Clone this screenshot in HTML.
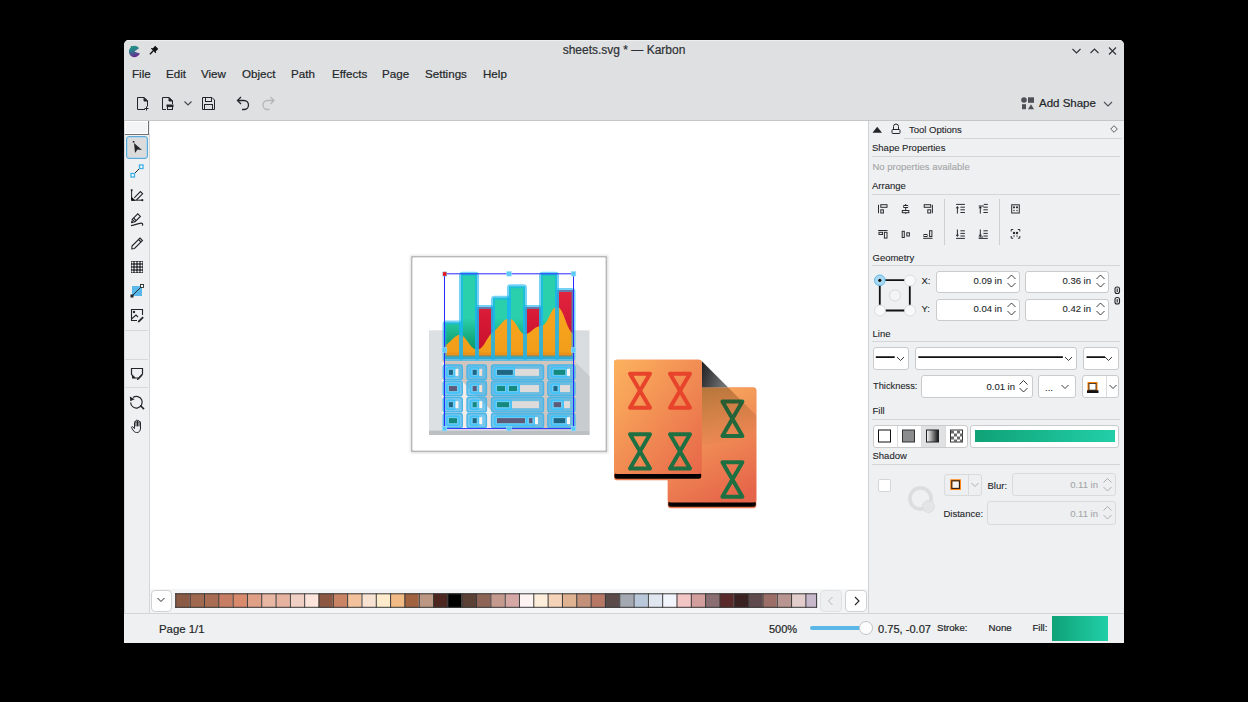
<!DOCTYPE html>
<html><head><meta charset="utf-8">
<style>
*{margin:0;padding:0;box-sizing:border-box}
html,body{width:1248px;height:702px;background:#000;overflow:hidden;font-family:"Liberation Sans",sans-serif;color:#232629}
.a{position:absolute}
.t{position:absolute;white-space:nowrap;line-height:1;-webkit-text-stroke:0.2px currentColor}
.m{font-size:11.6px;top:68.4px}
.d{font-size:9.5px;margin-top:-0.7px;-webkit-text-stroke:0.1px currentColor}
.sec{position:absolute;height:1px;background:#d3d5d7;left:872px;width:248px}
.box{position:absolute;background:#fff;border:1px solid #c9cbcd;border-radius:3px}
.dis{background:#eeeff0;border-color:#d9dadb}
svg{position:absolute;overflow:visible}
</style></head><body>
<!-- window -->
<div class="a" style="left:124px;top:40px;width:1000px;height:603px;background:#eff0f1;border-radius:5px 5px 0 0;overflow:hidden">
  <div class="a" style="left:0;top:0;width:1000px;height:80px;background:#dee0e2"></div>
  <div class="a" style="left:0;top:0;width:1000px;height:1px;background:#eceef0"></div>
</div>
<!-- title -->
<div class="t" style="left:124px;width:1000px;text-align:center;top:44.3px;font-size:12px;color:#2e3134">sheets.svg * — Karbon</div>
<!-- app icon -->
<svg style="left:128px;top:45px" width="14" height="13" viewBox="0 0 14 13">
  <defs><linearGradient id="ai" x1="0" y1="0" x2="0.3" y2="1"><stop offset="0" stop-color="#15a07a"/><stop offset="0.5" stop-color="#2f7a90"/><stop offset="1" stop-color="#6a2a90"/></linearGradient></defs>
  <path d="M6.5 6.5 L11.2 3.2 A5.7 5.7 0 1 0 12 8.2 Z" fill="url(#ai)"/>
  <path d="M6.5 6.5 L11.2 3.2 L9.8 6.2 L12.5 8.8 Z" fill="#d8dadc"/>
  <path d="M2.5 1.5 L4 0.9 L4.2 2.2 Z" fill="#0b5a40"/>
</svg>
<!-- pin -->
<svg style="left:149px;top:45px" width="10" height="10" viewBox="0 0 10 10">
  <path d="M6.2 0.8 L9.3 3.9 L6.8 6.2 L7.2 7.6 L6.6 8.2 L1.9 3.5 L2.5 2.9 L3.9 3.3 Z" fill="#111"/>
  <path d="M4.3 5.8 L0.9 9.2" stroke="#111" stroke-width="1.3"/>
</svg>
<!-- window buttons -->
<svg style="left:1071px;top:45.7px" width="48" height="10" viewBox="0 0 48 10">
  <path d="M1.5 3 L5.5 7 L9.5 3" fill="none" stroke="#2e3134" stroke-width="1.1"/>
  <path d="M19.5 7 L23.5 3 L27.5 7" fill="none" stroke="#2e3134" stroke-width="1.1"/>
  <path d="M38 1.5 L45 8.5 M45 1.5 L38 8.5" fill="none" stroke="#2e3134" stroke-width="1.1"/>
</svg>
<!-- menu -->
<div class="t m" style="left:132px">File</div>
<div class="t m" style="left:166px">Edit</div>
<div class="t m" style="left:201px">View</div>
<div class="t m" style="left:242px">Object</div>
<div class="t m" style="left:291px">Path</div>
<div class="t m" style="left:332px">Effects</div>
<div class="t m" style="left:382px">Page</div>
<div class="t m" style="left:425px">Settings</div>
<div class="t m" style="left:483px">Help</div>
<!-- toolbar icons -->
<svg style="left:134px;top:95px" width="150" height="16" viewBox="0 0 150 16">
  <g fill="none" stroke="#232629" stroke-width="1">
    <path d="M3.5 2.5 H10 L13.5 6 V11.5 M11 14.5 H3.5 V2.5"/>
    <path d="M10 2.5 L13.5 6 H10 Z" fill="#232629"/>
    <path d="M12.5 11.5 V15.5 M10.5 13.5 H14.5"/>
    <path d="M28.5 2.5 H35 L38.5 6 V9 M32 14.5 H28.5 V2.5"/>
    <path d="M35 2.5 L38.5 6 H35 Z" fill="#232629"/>
    <rect x="33.5" y="10.5" width="5" height="4" fill="#dee0e2"/><rect x="33" y="10" width="6" height="1.6" fill="#232629"/>
    <path d="M50.5 6.5 L54 10 L57.5 6.5" stroke="#4a4d50" stroke-width="1.2"/>
    <path d="M68.5 2.5 H78 L80.5 5 V14.5 H68.5 Z"/>
    <rect x="71.5" y="2.5" width="6" height="4"/>
    <rect x="70.5" y="9.5" width="8" height="5"/>
    <path d="M104 5.5 H110 A4.5 4.5 0 0 1 110 14.5 H108" stroke-width="1.3"/>
    <path d="M107 2 L103.5 5.5 L107 9" stroke-width="1.3"/>
    <path d="M139.5 5.5 H133.5 A4.5 4.5 0 0 0 133.5 14.5 H135.5" stroke="#b4b6b8" stroke-width="1.3"/>
    <path d="M136.5 2 L140 5.5 L136.5 9" stroke="#b4b6b8" stroke-width="1.3"/>
  </g>
</svg>
<!-- add shape -->
<svg style="left:1021px;top:97px" width="14" height="13" viewBox="0 0 14 13">
  <circle cx="3" cy="3" r="2.8" fill="#4d5054"/>
  <rect x="7" y="0.3" width="6" height="5.5" fill="#4d5054"/>
  <rect x="1" y="7.2" width="4" height="5" fill="#4d5054"/>
  <path d="M7 12.2 L10 7.2 L13 12.2 Z" fill="#4d5054"/>
</svg>
<div class="t" style="left:1039px;top:98.3px;font-size:11.5px">Add Shape</div>
<svg style="left:1103px;top:101px" width="10" height="6" viewBox="0 0 10 6"><path d="M1 1 L5 5 L9 1" fill="none" stroke="#4d5054" stroke-width="1.1"/></svg>

<!-- header separator -->
<div class="a" style="left:124px;top:120px;width:1000px;height:1px;background:#c4c6c8"></div>

<!-- toolbox -->
<div class="a" style="left:124px;top:121px;width:1px;height:492px;background:#d6d8da"></div>
<div class="a" style="left:125px;top:121px;width:23px;height:13px;background:#f3f4f5;border:1px solid #fff"></div>
<div class="a" style="left:148px;top:121px;width:1px;height:14px;background:#6e7275"></div>
<div class="a" style="left:125px;top:134px;width:24px;height:1px;background:#6e7275"></div>
<div class="a" style="left:149px;top:134px;width:1px;height:479px;background:#d4d6d8"></div>


<!-- toolbox buttons -->
<div class="a" style="left:125.5px;top:136px;width:22.5px;height:22.5px;border:1px solid #5eaad6;border-radius:3px;background:#dcdbdb;box-shadow:inset 0 0 0 1px #b4d6ea"></div>
<svg style="left:129px;top:139px" width="16" height="16" viewBox="0 0 16 16">
  <path d="M5 4 L13 11 L8.5 10.5 L6 14 Z" fill="#232629"/>
  <rect x="3.8" y="2" width="1.6" height="1.6" fill="#232629"/>
</svg>
<svg style="left:129px;top:163px" width="16" height="16" viewBox="0 0 16 16">
  <path d="M4 12 L12 4" stroke="#232629" stroke-width="1"/>
  <rect x="2" y="10.5" width="3.5" height="3.5" fill="#fff" stroke="#3daee9" stroke-width="1.3"/>
  <rect x="10.5" y="2" width="3.5" height="3.5" fill="#fff" stroke="#3daee9" stroke-width="1.3"/>
</svg>
<svg style="left:129px;top:187px" width="16" height="16" viewBox="0 0 16 16">
  <g fill="none" stroke="#232629">
  <path d="M2.6 3 V13.2 H13" stroke-width="1"/>
  <path d="M5.2 10.8 L11.4 4.6 L13.6 6.8 L7.4 13" stroke-width="1.1"/>
  </g>
  <rect x="1.8" y="2.2" width="1.7" height="2" fill="#232629"/>
  <circle cx="13.3" cy="13.2" r="1.1" fill="#232629"/>
  <path d="M2.2 9.6 L6.6 13.8 L2.2 13.8 Z" fill="#111"/>
</svg>
<svg style="left:129px;top:211px" width="16" height="16" viewBox="0 0 16 16">
  <g fill="none" stroke="#232629" stroke-width="1.1">
  <path d="M3.2 8.4 L8.8 2.8 L11.4 5.4 L5.8 11 Z"/>
  <path d="M4.6 7 L7.2 9.6"/>
  <path d="M2 14.6 C5.5 14.2 8.5 12.8 11 12.3 C13.5 11.8 14.4 12.8 13.2 14.6" stroke-width="1.2"/>
  </g>
  <path d="M2.5 9.2 L5 11.7 L2.1 12.2 Z" fill="#111"/>
</svg>
<svg style="left:129px;top:235px" width="16" height="16" viewBox="0 0 16 16">
  <g fill="none" stroke="#232629" stroke-width="1.1">
  <path d="M3 11 L11 3 L13.5 5.5 L5.5 13.5 L2.8 13.8 Z"/>
  <path d="M9.5 4.5 L12 7"/>
  </g>
</svg>
<svg style="left:129px;top:259px" width="16" height="16" viewBox="0 0 16 16">
  <rect x="2" y="2" width="12" height="12" fill="#232629"/>
  <g fill="#eff0f1"><circle cx="3.5" cy="3.5" r="1.05"/><circle cx="3.5" cy="6.5" r="1.05"/><circle cx="3.5" cy="9.5" r="1.05"/><circle cx="3.5" cy="12.5" r="1.05"/><circle cx="6.5" cy="3.5" r="1.05"/><circle cx="6.5" cy="6.5" r="1.05"/><circle cx="6.5" cy="9.5" r="1.05"/><circle cx="6.5" cy="12.5" r="1.05"/><circle cx="9.5" cy="3.5" r="1.05"/><circle cx="9.5" cy="6.5" r="1.05"/><circle cx="9.5" cy="9.5" r="1.05"/><circle cx="9.5" cy="12.5" r="1.05"/><circle cx="12.5" cy="3.5" r="1.05"/><circle cx="12.5" cy="6.5" r="1.05"/><circle cx="12.5" cy="9.5" r="1.05"/><circle cx="12.5" cy="12.5" r="1.05"/></g>
</svg>
<svg style="left:129px;top:283px" width="16" height="16" viewBox="0 0 16 16">
  <rect x="3" y="3" width="10" height="10" fill="#3daee9" opacity="0.85"/>
  <path d="M3 13 L13 3" stroke="#232629" stroke-width="1"/>
  <rect x="1.5" y="11.5" width="3" height="3" fill="#232629"/>
  <rect x="11.5" y="1.5" width="3" height="3" fill="#fff" stroke="#232629" stroke-width="0.9"/>
</svg>
<svg style="left:129px;top:307px" width="16" height="16" viewBox="0 0 16 16">
  <g fill="none" stroke="#232629" stroke-width="1.1">
  <path d="M8 13.5 H2.5 V2.5 H13.5 V8"/>
  <path d="M2.5 12 L7 8 L9 10"/>
  </g>
  <circle cx="5" cy="5" r="1.2" fill="#232629"/>
  <path d="M9 14 L13.5 9.5 L14.8 10.8 L10.3 15.3 L8.8 15.3 Z" fill="#232629"/>
</svg>
<div class="a" style="left:125px;top:330px;width:23px;height:1px;background:#d6d8da"></div>
<div class="a" style="left:125px;top:359px;width:23px;height:1px;background:#d6d8da"></div>
<svg style="left:129px;top:365px" width="16" height="16" viewBox="0 0 16 16">
  <g fill="none" stroke="#232629" stroke-width="1.2">
  <path d="M2.5 3.5 H13.5 V9 L10 13 H6 L2.5 9.5 Z"/>
  </g>
  <path d="M3 10 L6.5 13.5 L3 13.5 Z" fill="#232629"/>
  <path d="M8 14 L12.5 9.5 L13.5 10.5 L9 15 L8 15 Z" fill="#232629"/>
</svg>
<div class="a" style="left:125px;top:387px;width:23px;height:1px;background:#d6d8da"></div>
<svg style="left:129px;top:394px" width="16" height="16" viewBox="0 0 16 16">
  <g fill="none" stroke="#232629" stroke-width="1.2">
  <path d="M4 3.5 A5.8 5.8 0 1 1 1.6 8.5"/>
  <path d="M11.3 11.5 L15 15.2" stroke-width="1.7"/>
  </g>
  <path d="M0.8 2.5 L1.3 7.3 L5.6 5.2 Z" fill="#232629"/>
</svg>
<svg style="left:129px;top:418px" width="16" height="16" viewBox="0 0 16 16">
  <path d="M5.5 9.5 V4.2 C5.5 3.2 7 3.2 7 4.2 V8 M7 4.2 V2.8 C7 1.8 8.5 1.8 8.5 2.8 V8 M8.5 3.2 C8.5 2.2 10 2.2 10 3.2 V8 M10 4.2 C10 3.2 11.5 3.2 11.5 4.2 V10 C11.5 13 10 14.5 8 14.5 H7.5 C5.8 14.5 5 13.5 4 12 L2.6 9.8 C2.2 9 3 8.3 3.8 8.9 L5.5 10.5" fill="none" stroke="#232629" stroke-width="1" stroke-linejoin="round" stroke-linecap="round"/>
</svg>

<!-- canvas -->
<div class="a" style="left:150px;top:121px;width:718px;height:468px;background:#fff"></div>
<!-- DRAW -->
<svg style="left:0;top:0" width="1248" height="702" viewBox="0 0 1248 702">
<defs>
<linearGradient id="gb" gradientUnits="userSpaceOnUse" x1="0" y1="318" x2="0" y2="348"><stop offset="0" stop-color="#2ad0ac"/><stop offset="1" stop-color="#0d9a68"/></linearGradient>
<linearGradient id="rb" gradientUnits="userSpaceOnUse" x1="0" y1="290" x2="0" y2="350"><stop offset="0" stop-color="#e3243f"/><stop offset="1" stop-color="#c80f2c"/></linearGradient>
<linearGradient id="og" gradientUnits="userSpaceOnUse" x1="0" y1="310" x2="0" y2="356"><stop offset="0" stop-color="#f7a51e"/><stop offset="1" stop-color="#f29d1a"/></linearGradient>
<linearGradient id="pn" x1="0" y1="0" x2="1" y2="0"><stop offset="0" stop-color="#dde0e3"/><stop offset="1" stop-color="#d9dcdf"/></linearGradient>
<linearGradient id="doc" x1="0" y1="0" x2="1" y2="1"><stop offset="0" stop-color="#fcb35e"/><stop offset="1" stop-color="#e76749"/></linearGradient>
<linearGradient id="doc2" x1="0.3" y1="0" x2="0.7" y2="1"><stop offset="0" stop-color="#f9ad5e"/><stop offset="1" stop-color="#e6654a"/></linearGradient>
<linearGradient id="fold" x1="0" y1="0" x2="1" y2="1"><stop offset="0" stop-color="#222" stop-opacity="0.95"/><stop offset="0.6" stop-color="#333" stop-opacity="0.6"/><stop offset="1" stop-color="#555" stop-opacity="0"/></linearGradient>
<filter id="ps" x="-5%" y="-5%" width="110%" height="110%"><feGaussianBlur stdDeviation="1"/></filter>
</defs>
<rect x="411.5" y="256.5" width="195.5" height="195.5" fill="none" stroke="#bbb" stroke-width="2" opacity="0.6" filter="url(#ps)"/>
<rect x="412" y="257" width="194" height="194" fill="#fff" stroke="#949494" stroke-width="1.1"/>
<rect x="412.5" y="257.5" width="193" height="193" fill="#fff"/>
<rect x="429" y="330.3" width="160.5" height="104.7" fill="url(#pn)"/>
<rect x="429" y="430.6" width="160.5" height="4.4" fill="#bcc0c3"/>
<path d="M575 362 L589.5 376 V430.6 H575 Z" fill="#c9cccf"/>
<rect x="442" y="359.5" width="133.5" height="70" fill="#d0c5bf"/>
<path d="M442 361 L511 430 H442 Z" fill="#f3ece8"/>
<rect x="444.5" y="322.5" width="16.5" height="33.5" fill="url(#gb)"/>
<rect x="461" y="273.8" width="16" height="82.19999999999999" fill="url(#gb)"/>
<rect x="477" y="307" width="16" height="49" fill="url(#rb)"/>
<rect x="493" y="297.7" width="16" height="58.30000000000001" fill="url(#gb)"/>
<rect x="509" y="286.3" width="16" height="69.69999999999999" fill="url(#gb)"/>
<rect x="525" y="307" width="16" height="49" fill="url(#rb)"/>
<rect x="541" y="273.8" width="16" height="82.19999999999999" fill="url(#gb)"/>
<rect x="557" y="290" width="16.5" height="66" fill="url(#rb)"/>
<path d="M444.5 346 C451 342 455 334.8 460 334.8 C466 334.8 470 349.7 477 349.7 C484 349.7 487 336 493 332 C500 327 503 318.4 509 318.4 C516 318.4 519 334 525 334 C531 334 534 326.2 541 326 C549 325 550 307 557 307 C564 307 566 330 573.5 334 V355.6 H444.5 Z" fill="url(#og)"/>
<rect x="444.5" y="352.5" width="129" height="3.1" fill="#ea921a"/>
<rect x="444.5" y="355.6" width="129" height="3.4" fill="#5a9a9c"/>
<rect x="444.5" y="322.5" width="16.5" height="36.5" rx="1.5" fill="none" stroke="#18b4f2" stroke-opacity="0.6" stroke-width="4"/>
<rect x="461" y="273.8" width="16" height="85.19999999999999" rx="1.5" fill="none" stroke="#18b4f2" stroke-opacity="0.6" stroke-width="4"/>
<rect x="477" y="307" width="16" height="52" rx="1.5" fill="none" stroke="#18b4f2" stroke-opacity="0.6" stroke-width="4"/>
<rect x="493" y="297.7" width="16" height="61.30000000000001" rx="1.5" fill="none" stroke="#18b4f2" stroke-opacity="0.6" stroke-width="4"/>
<rect x="509" y="286.3" width="16" height="72.69999999999999" rx="1.5" fill="none" stroke="#18b4f2" stroke-opacity="0.6" stroke-width="4"/>
<rect x="525" y="307" width="16" height="52" rx="1.5" fill="none" stroke="#18b4f2" stroke-opacity="0.6" stroke-width="4"/>
<rect x="541" y="273.8" width="16" height="85.19999999999999" rx="1.5" fill="none" stroke="#18b4f2" stroke-opacity="0.6" stroke-width="4"/>
<rect x="557" y="290" width="16.5" height="69" rx="1.5" fill="none" stroke="#18b4f2" stroke-opacity="0.6" stroke-width="4"/>
<rect x="443.2" y="365.0" width="19.100000000000044" height="14.700000000000012" rx="2.2" fill="#42b8f0" fill-opacity="0.7" stroke="#4ab6e8" stroke-width="1.4"/>
<rect x="467.0" y="365.0" width="19.4" height="14.700000000000012" rx="2.2" fill="#42b8f0" fill-opacity="0.7" stroke="#4ab6e8" stroke-width="1.4"/>
<rect x="491.5" y="365.0" width="51.999999999999964" height="14.700000000000012" rx="2.2" fill="#42b8f0" fill-opacity="0.7" stroke="#4ab6e8" stroke-width="1.4"/>
<rect x="547.8" y="365.0" width="27.100000000000044" height="14.700000000000012" rx="2.2" fill="#42b8f0" fill-opacity="0.7" stroke="#4ab6e8" stroke-width="1.4"/>
<rect x="443.2" y="381.3" width="19.100000000000044" height="14.500000000000023" rx="2.2" fill="#42b8f0" fill-opacity="0.7" stroke="#4ab6e8" stroke-width="1.4"/>
<rect x="467.0" y="381.3" width="19.4" height="14.500000000000023" rx="2.2" fill="#42b8f0" fill-opacity="0.7" stroke="#4ab6e8" stroke-width="1.4"/>
<rect x="491.5" y="381.3" width="51.999999999999964" height="14.500000000000023" rx="2.2" fill="#42b8f0" fill-opacity="0.7" stroke="#4ab6e8" stroke-width="1.4"/>
<rect x="547.8" y="381.3" width="27.100000000000044" height="14.500000000000023" rx="2.2" fill="#42b8f0" fill-opacity="0.7" stroke="#4ab6e8" stroke-width="1.4"/>
<rect x="443.2" y="397.40000000000003" width="19.100000000000044" height="14.499999999999966" rx="2.2" fill="#42b8f0" fill-opacity="0.7" stroke="#4ab6e8" stroke-width="1.4"/>
<rect x="467.0" y="397.40000000000003" width="19.4" height="14.499999999999966" rx="2.2" fill="#42b8f0" fill-opacity="0.7" stroke="#4ab6e8" stroke-width="1.4"/>
<rect x="491.5" y="397.40000000000003" width="51.999999999999964" height="14.499999999999966" rx="2.2" fill="#42b8f0" fill-opacity="0.7" stroke="#4ab6e8" stroke-width="1.4"/>
<rect x="547.8" y="397.40000000000003" width="27.100000000000044" height="14.499999999999966" rx="2.2" fill="#42b8f0" fill-opacity="0.7" stroke="#4ab6e8" stroke-width="1.4"/>
<rect x="443.2" y="413.5" width="19.100000000000044" height="14.300000000000034" rx="2.2" fill="#42b8f0" fill-opacity="0.7" stroke="#4ab6e8" stroke-width="1.4"/>
<rect x="467.0" y="413.5" width="19.4" height="14.300000000000034" rx="2.2" fill="#42b8f0" fill-opacity="0.7" stroke="#4ab6e8" stroke-width="1.4"/>
<rect x="491.5" y="413.5" width="51.999999999999964" height="14.300000000000034" rx="2.2" fill="#42b8f0" fill-opacity="0.7" stroke="#4ab6e8" stroke-width="1.4"/>
<rect x="547.8" y="413.5" width="27.100000000000044" height="14.300000000000034" rx="2.2" fill="#42b8f0" fill-opacity="0.7" stroke="#4ab6e8" stroke-width="1.4"/>
<rect x="446.59999999999997" y="367.85" width="8.6" height="9" rx="2" fill="#6fcaf0" stroke="#3ec2fb" stroke-width="1.5"/>
<rect x="448.9" y="369.85" width="4" height="5" fill="#1f6584"/>
<rect x="455.4" y="368.85" width="3" height="7" fill="#fbf6f2"/>
<rect x="470.4" y="367.85" width="8.6" height="9" rx="2" fill="#6fcaf0" stroke="#3ec2fb" stroke-width="1.5"/>
<rect x="472.7" y="369.85" width="4" height="5" fill="#1f6584"/>
<rect x="479.2" y="368.85" width="3" height="7" fill="#f2e0d8"/>
<rect x="494.7" y="367.85" width="20.399999999999956" height="9" rx="2" fill="#6fcaf0" stroke="#3ec2fb" stroke-width="1.5"/>
<rect x="497" y="369.85" width="15.799999999999955" height="5" fill="#1f6584"/>
<rect x="515" y="368.85" width="24" height="7" fill="#dedcdb"/>
<rect x="551.4000000000001" y="367.85" width="16.1" height="9" rx="2" fill="#6fcaf0" stroke="#3ec2fb" stroke-width="1.5"/>
<rect x="553.7" y="369.85" width="11.5" height="5" fill="#14897e"/>
<rect x="567" y="368.85" width="3" height="7" fill="#fbf6f2"/>
<rect x="446.7" y="384.05" width="12.6" height="9" rx="2" fill="#6fcaf0" stroke="#3ec2fb" stroke-width="1.5"/>
<rect x="449" y="386.05" width="8" height="5" fill="#5e5a7a"/>
<rect x="470.4" y="384.05" width="8.6" height="9" rx="2" fill="#6fcaf0" stroke="#3ec2fb" stroke-width="1.5"/>
<rect x="472.7" y="386.05" width="4" height="5" fill="#5e5a7a"/>
<rect x="479.2" y="385.05" width="3" height="7" fill="#f2e0d8"/>
<rect x="494.7" y="384.05" width="12.6" height="9" rx="2" fill="#6fcaf0" stroke="#3ec2fb" stroke-width="1.5"/>
<rect x="506.7" y="384.05" width="12.6" height="9" rx="2" fill="#6fcaf0" stroke="#3ec2fb" stroke-width="1.5"/>
<rect x="497" y="386.05" width="8" height="5" fill="#14897e"/>
<rect x="509" y="386.05" width="8" height="5" fill="#14897e"/>
<rect x="520" y="385.05" width="19" height="7" fill="#dedcdb"/>
<rect x="551.2" y="384.05" width="8.6" height="9" rx="2" fill="#6fcaf0" stroke="#3ec2fb" stroke-width="1.5"/>
<rect x="553.5" y="386.05" width="4" height="5" fill="#1f6584"/>
<rect x="560" y="385.05" width="10" height="7" fill="#dedcdb"/>
<rect x="446.59999999999997" y="400.15" width="8.6" height="9" rx="2" fill="#6fcaf0" stroke="#3ec2fb" stroke-width="1.5"/>
<rect x="448.9" y="402.15" width="4" height="5" fill="#1f6584"/>
<rect x="455.4" y="401.15" width="3" height="7" fill="#fbf6f2"/>
<rect x="470.4" y="400.15" width="8.6" height="9" rx="2" fill="#6fcaf0" stroke="#3ec2fb" stroke-width="1.5"/>
<rect x="472.7" y="402.15" width="4" height="5" fill="#14897e"/>
<rect x="479.2" y="401.15" width="3" height="7" fill="#fbf6f2"/>
<rect x="494.7" y="400.15" width="16.6" height="9" rx="2" fill="#6fcaf0" stroke="#3ec2fb" stroke-width="1.5"/>
<rect x="497" y="402.15" width="12" height="5" fill="#14897e"/>
<rect x="512" y="401.15" width="27" height="7" fill="#dedcdb"/>
<rect x="551.4000000000001" y="400.15" width="11.899999999999954" height="9" rx="2" fill="#6fcaf0" stroke="#3ec2fb" stroke-width="1.5"/>
<rect x="553.7" y="402.15" width="7.2999999999999545" height="5" fill="#5e5a7a"/>
<rect x="564" y="401.15" width="6" height="7" fill="#dedcdb"/>
<rect x="446.7" y="416.15" width="12.6" height="9" rx="2" fill="#6fcaf0" stroke="#3ec2fb" stroke-width="1.5"/>
<rect x="449" y="418.15" width="8" height="5" fill="#14897e"/>
<rect x="470.4" y="416.15" width="8.6" height="9" rx="2" fill="#6fcaf0" stroke="#3ec2fb" stroke-width="1.5"/>
<rect x="472.7" y="418.15" width="4" height="5" fill="#1f6584"/>
<rect x="479.2" y="417.15" width="3" height="7" fill="#fbf6f2"/>
<rect x="494.7" y="416.15" width="32.6" height="9" rx="2" fill="#6fcaf0" stroke="#3ec2fb" stroke-width="1.5"/>
<rect x="526.7" y="416.15" width="8.1" height="9" rx="2" fill="#6fcaf0" stroke="#3ec2fb" stroke-width="1.5"/>
<rect x="497" y="418.15" width="28" height="5" fill="#5e5a7a"/>
<rect x="529" y="418.15" width="3.5" height="5" fill="#5e5a7a"/>
<rect x="535" y="417.15" width="3" height="7" fill="#fbf6f2"/>
<rect x="551.4000000000001" y="416.15" width="16.1" height="9" rx="2" fill="#6fcaf0" stroke="#3ec2fb" stroke-width="1.5"/>
<rect x="553.7" y="418.15" width="11.5" height="5" fill="#1f6584"/>
<rect x="567" y="417.15" width="3" height="7" fill="#fbf6f2"/>
<rect x="444.5" y="273.8" width="129" height="154.8" fill="none" stroke="#2a2aff" stroke-width="1"/>
<rect x="506.7" y="271.5" width="4.6" height="4.6" fill="#5cc8f8" stroke="#9de0ff" stroke-width="0.6"/>
<rect x="571.2" y="271.5" width="4.6" height="4.6" fill="#5cc8f8" stroke="#9de0ff" stroke-width="0.6"/>
<rect x="442.2" y="347.7" width="4.6" height="4.6" fill="#5cc8f8" stroke="#9de0ff" stroke-width="0.6"/>
<rect x="571.2" y="347.7" width="4.6" height="4.6" fill="#5cc8f8" stroke="#9de0ff" stroke-width="0.6"/>
<rect x="442.2" y="426.3" width="4.6" height="4.6" fill="#5cc8f8" stroke="#9de0ff" stroke-width="0.6"/>
<rect x="506.7" y="426.3" width="4.6" height="4.6" fill="#5cc8f8" stroke="#9de0ff" stroke-width="0.6"/>
<rect x="571.2" y="426.3" width="4.6" height="4.6" fill="#5cc8f8" stroke="#9de0ff" stroke-width="0.6"/>
<rect x="442.8" y="271.9" width="4" height="4.2" fill="#e8141a" stroke="#7fd0f0" stroke-width="0.5"/>
<rect x="667.8" y="387.5" width="88.5" height="120.8" rx="3" fill="#ec7a50"/>
<rect x="668.3" y="501" width="87.5" height="5.8" rx="2.5" fill="#050100"/>
<rect x="667.8" y="387.5" width="88.5" height="115" rx="3" fill="url(#doc2)"/>
<path d="M722.4 401.6 H742.4 L722.4 436.1 H742.4 Z" fill="none" stroke="#1e7042" stroke-width="4" stroke-linejoin="round"/>
<path d="M722.4 462.2 H742.4 L722.4 496.7 H742.4 Z" fill="none" stroke="#1e7042" stroke-width="4" stroke-linejoin="round"/>
<defs><clipPath id="bdc"><rect x="667.8" y="387.5" width="88.5" height="115" rx="3"/></clipPath><linearGradient id="fd" x1="0" y1="0" x2="1" y2="0.3"><stop offset="0" stop-color="#1e1e20"/><stop offset="1" stop-color="#707274"/></linearGradient><linearGradient id="fs2" gradientUnits="userSpaceOnUse" x1="702" y1="388" x2="720" y2="445"><stop offset="0" stop-color="#4a2000" stop-opacity="0.38"/><stop offset="1" stop-color="#4a2000" stop-opacity="0"/></linearGradient></defs>
<path d="M701.7 361 L728.2 387.5 L701.7 387.5 Z" fill="url(#fd)"/>
<g clip-path="url(#bdc)"><path d="M701.7 387.5 L728.2 387.5 L785 444.3 L701.7 444.3 Z" fill="url(#fs2)"/></g>
<rect x="614" y="359.7" width="87.7" height="120.5" rx="3" fill="#ee7c50"/>
<rect x="614.5" y="472.8" width="86.7" height="5.9" rx="2.5" fill="#050100"/>
<rect x="614" y="359.7" width="87.7" height="114.3" rx="3" fill="url(#doc)"/>
<path d="M630.0 373.8 H650.0 L630.0 407.8 H650.0 Z" fill="none" stroke="#e8432b" stroke-width="4" stroke-linejoin="round"/>
<path d="M670.0 373.8 H690.0 L670.0 407.8 H690.0 Z" fill="none" stroke="#e8432b" stroke-width="4" stroke-linejoin="round"/>
<path d="M630.0 434.3 H650.0 L630.0 468.4 H650.0 Z" fill="none" stroke="#1e7042" stroke-width="4" stroke-linejoin="round"/>
<path d="M670.0 434.3 H690.0 L670.0 468.4 H690.0 Z" fill="none" stroke="#1e7042" stroke-width="4" stroke-linejoin="round"/>
</svg>
<!-- /DRAW -->
<!-- docker border -->
<div class="a" style="left:868px;top:121px;width:1px;height:492px;background:#cfd1d3"></div>


<!-- docker content -->
<svg style="left:872px;top:126px" width="11" height="7" viewBox="0 0 11 7"><path d="M0.5 6.8 L5.2 0.8 L10 6.8 Z" fill="#232629"/></svg>
<svg style="left:891px;top:123px" width="10" height="11" viewBox="0 0 10 11"><g fill="none" stroke="#232629" stroke-width="1"><path d="M2.5 6.5 V3.5 A2.5 2.5 0 0 1 7.5 3.5 V6.5"/><rect x="1" y="6.5" width="8" height="4" rx="0.8"/></g></svg>
<div class="t d" style="left:909px;top:125.5px">Tool Options</div>
<svg style="left:1110px;top:125px" width="8" height="8" viewBox="0 0 8 8"><path d="M4 0.7 L7.3 4 L4 7.3 L0.7 4 Z" fill="none" stroke="#5d6063" stroke-width="1"/></svg>
<div class="a" style="left:904px;top:138px;width:218px;height:1px;background:#d3d5d7"></div>
<div class="t d" style="left:872px;top:143.5px">Shape Properties</div>
<div class="sec" style="top:156px"></div>
<div class="t d" style="left:872.5px;top:162.5px;color:#a3a5a7">No properties available</div>
<div class="t d" style="left:872px;top:181.5px">Arrange</div>
<div class="sec" style="top:194px"></div>
<svg style="left:872px;top:198px" width="150" height="48" viewBox="0 0 150 48">
  <g fill="none" stroke="#2a2d30" stroke-width="1">
    <path d="M6.5 6.8 V15.2"/><rect x="8.8" y="6.7" width="6.2" height="2.6"/><rect x="8.8" y="11.8" width="2.6" height="3.2"/>
    <path d="M33.7 6 V7.3 M33.7 9.8 V12.5 M33.7 15 V16"/><rect x="31.8" y="7.5" width="3.8" height="2"/><rect x="30.3" y="12.5" width="6.5" height="2.2"/>
    <path d="M60.4 6.8 V15.2"/><rect x="52.2" y="6.7" width="6.5" height="2.6"/><rect x="55.8" y="11.8" width="2.9" height="3.2"/>
    <path d="M6.2 32.5 H15.5"/><rect x="7" y="34.3" width="3.5" height="2.2"/><rect x="12.4" y="34.3" width="2.6" height="5.8"/>
    <rect x="30.2" y="33.3" width="2.1" height="6.2"/><rect x="34.8" y="34.8" width="2.6" height="3.2"/>
    <path d="M51.2 40.3 H60.5"/><rect x="52" y="36.5" width="3" height="2"/><rect x="57.6" y="32.7" width="2.3" height="5.8"/>
    <path d="M84.1 6.4 H92.9 M85.4 9 V15.6 M88.4 9.2 H92.9 M88.4 11.8 H92.9 M88.4 14.5 H92.9" />
    <path d="M111.8 6.4 H115.8 M106.7 8 H111.8 M108.3 9 V15.6 M111.4 9.2 H115.8 M111.4 11.8 H115.8 M111.4 14.5 H115.8"/>
    <path d="M84.1 40.4 H92.9 M85.4 31.5 V38 M88.4 32.8 H92.9 M88.4 35.4 H92.9 M88.4 38 H92.9"/>
    <path d="M106.7 40.4 H115.8 M108.3 31.5 V38 M111.4 32.8 H115.8 M111.4 35.4 H115.8 M111.4 38 H115.8 M106.7 39 H111"/>
    <rect x="139.7" y="6.8" width="7.6" height="8.2"/>
    <path d="M139.2 33.5 V31.5 H141.2 M145.8 31.5 H147.8 V33.5 M147.8 38 V40.2 H145.8 M141.2 40.2 H139.2 V38"/>
  </g>
  <g fill="#2a2d30">
    <path d="M83.7 10.2 L85.4 8 L87.1 10.2 Z M106.6 10.2 L108.3 8 L110 10.2 Z M83.7 36.8 L85.4 39 L87.1 36.8 Z M106.6 36.8 L108.3 39 L110 36.8 Z"/>
    <circle cx="142" cy="9.3" r="1.1"/><circle cx="145" cy="9.3" r="1.1"/><circle cx="142" cy="12.5" r="0.7"/><circle cx="145" cy="12.5" r="0.7"/>
    <circle cx="142" cy="35" r="1.2"/><circle cx="145" cy="35" r="1.2"/><circle cx="142" cy="38" r="0.7"/><circle cx="145" cy="38" r="0.7"/>
  </g>
</svg>
<div class="a" style="left:944px;top:199px;width:1px;height:46px;background:#cdcfd1"></div>
<div class="a" style="left:999px;top:199px;width:1px;height:46px;background:#cdcfd1"></div>
<div class="t d" style="left:872.5px;top:253.5px">Geometry</div>
<div class="sec" style="top:265px"></div>
<!-- anchor widget -->
<svg style="left:872px;top:273px" width="46" height="46" viewBox="0 0 46 46">
  <path d="M7.8 7.2 H37.5 M37.8 7.5 V37.5 M37.5 37.5 H8 M7.8 37.5 V7.2" fill="none" stroke="#111" stroke-width="1.8"/>
  <circle cx="38" cy="7.5" r="5.5" fill="#f8f9f9" stroke="#d4d6d8" stroke-width="0.8"/>
  <circle cx="8" cy="37.5" r="5.5" fill="#f8f9f9" stroke="#d4d6d8" stroke-width="0.8"/>
  <circle cx="38" cy="37.5" r="5.5" fill="#f8f9f9" stroke="#d4d6d8" stroke-width="0.8"/>
  <circle cx="23" cy="22.5" r="5.6" fill="#f3f4f5" stroke="#d0d2d4" stroke-width="0.8"/>
  <circle cx="7.8" cy="7.3" r="5.3" fill="#a9d8f2" stroke="#5ab6e6" stroke-width="1"/>
  <circle cx="7.8" cy="7.3" r="1.6" fill="#111"/>
</svg>
<div class="t d" style="left:921.5px;top:276.5px">X:</div>
<div class="t d" style="left:921.5px;top:305px">Y:</div>
<div class="box" style="left:935.5px;top:270.5px;width:84px;height:22px"></div>
<div class="box" style="left:1024.5px;top:270.5px;width:84px;height:22px"></div>
<div class="box" style="left:935.5px;top:298.5px;width:84px;height:22px"></div>
<div class="box" style="left:1024.5px;top:298.5px;width:84px;height:22px"></div>
<div class="t d" style="left:935px;width:67px;text-align:right;top:277px">0.09 in</div>
<div class="t d" style="left:1024px;width:67px;text-align:right;top:277px">0.36 in</div>
<div class="t d" style="left:935px;width:67px;text-align:right;top:305px">0.04 in</div>
<div class="t d" style="left:1024px;width:67px;text-align:right;top:305px">0.42 in</div>
<svg style="left:1005.5px;top:273px" width="12" height="46" viewBox="0 0 12 46">
  <g fill="none" stroke="#232629" stroke-width="0.9">
  <path d="M1.5 6 L5.5 2 L9.5 6 M1.5 10 L5.5 14 L9.5 10"/>
  <path d="M1.5 34 L5.5 30 L9.5 34 M1.5 38 L5.5 42 L9.5 38"/>
  </g>
</svg>
<svg style="left:1094.5px;top:273px" width="12" height="46" viewBox="0 0 12 46">
  <g fill="none" stroke="#232629" stroke-width="0.9">
  <path d="M1.5 6 L5.5 2 L9.5 6 M1.5 10 L5.5 14 L9.5 10"/>
  <path d="M1.5 34 L5.5 30 L9.5 34 M1.5 38 L5.5 42 L9.5 38"/>
  </g>
</svg>
<svg style="left:1113.8px;top:285.5px" width="7" height="20" viewBox="0 0 7 20">
  <g fill="none" stroke="#232629" stroke-width="1.1"><rect x="1" y="1" width="4.5" height="6.5" rx="2"/><rect x="1" y="11.5" width="4.5" height="6.5" rx="2"/><path d="M3.2 2.5 V6 M3.2 13 V16.5"/></g>
</svg>
<div class="t d" style="left:872.5px;top:330px">Line</div>
<div class="sec" style="top:341px"></div>
<div class="box" style="left:873px;top:347px;width:36px;height:23px"></div>
<div class="box" style="left:915px;top:347px;width:162px;height:23px"></div>
<div class="box" style="left:1083px;top:347px;width:36px;height:23px"></div>
<svg style="left:873px;top:347px" width="246" height="23" viewBox="0 0 246 23">
  <g fill="none" stroke="#111" stroke-width="1.7">
  <path d="M2.8 10.2 H21.7 M45.3 10.2 H189.9 M213.5 10.2 H232"/>
  </g>
  <g fill="none" stroke="#232629" stroke-width="0.9">
  <path d="M24 10 L27.5 13.5 L31 10 M192 10 L195.5 13.5 L199 10 M232 10 L235.5 13.5 L239 10"/>
  </g>
</svg>
<div class="t d" style="left:873px;top:382.3px;font-size:9.3px">Thickness:</div>
<div class="box" style="left:921px;top:375px;width:112px;height:23px"></div>
<div class="t d" style="left:921px;width:94px;text-align:right;top:383px">0.01 in</div>
<svg style="left:1018px;top:376px" width="12" height="22" viewBox="0 0 12 22">
  <g fill="none" stroke="#232629" stroke-width="0.9"><path d="M1.5 8.5 L5.5 4.5 L9.5 8.5 M1.5 12 L5.5 16 L9.5 12"/></g>
</svg>
<div class="box" style="left:1038px;top:375px;width:38px;height:23px"></div>
<div class="t d" style="left:1045px;top:383.3px">...</div>
<svg style="left:1060px;top:384px" width="10" height="6" viewBox="0 0 10 6"><path d="M1.5 1 L5 4.5 L8.5 1" fill="none" stroke="#232629" stroke-width="0.9"/></svg>
<div class="box" style="left:1082px;top:375px;width:37px;height:23px"></div>
<div class="a" style="left:1106px;top:376px;width:1px;height:21px;background:#dadbdc"></div>
<svg style="left:1086px;top:380px" width="14" height="14" viewBox="0 0 14 14">
  <rect x="2.3" y="2.8" width="8.4" height="8" fill="none" stroke="#ff8000" stroke-width="1.6"/>
  <rect x="3" y="3.5" width="7" height="6.6" fill="none" stroke="#222" stroke-width="0.8"/>
  <rect x="1" y="10.3" width="11.5" height="2.7" fill="#111"/>
</svg>
<svg style="left:1108px;top:384px" width="10" height="6" viewBox="0 0 10 6"><path d="M1.5 1 L5 4.5 L8.5 1" fill="none" stroke="#232629" stroke-width="0.9"/></svg>
<div class="t d" style="left:872.5px;top:407px">Fill</div>
<div class="sec" style="top:419px"></div>
<div class="box" style="left:873px;top:424.5px;width:95px;height:23px;overflow:hidden">
  <div class="a" style="left:46.5px;top:0;width:24px;height:21px;background:#e0e1e2"></div>
  <div class="a" style="left:22.5px;top:0;width:1px;height:21px;background:#dadbdc"></div>
  <div class="a" style="left:46.5px;top:0;width:1px;height:21px;background:#dadbdc"></div>
  <div class="a" style="left:70.5px;top:0;width:1px;height:21px;background:#dadbdc"></div>
</div>
<svg style="left:873px;top:424px" width="95" height="23" viewBox="0 0 95 23">
  <defs><linearGradient id="fg" x1="0" x2="1"><stop offset="0" stop-color="#fff"/><stop offset="1" stop-color="#111"/></linearGradient></defs>
  <rect x="5.5" y="6" width="12" height="12" fill="#fff" stroke="#111" stroke-width="1"/>
  <rect x="29.5" y="6" width="12" height="12" fill="#8a8c8e" stroke="#333" stroke-width="1"/>
  <rect x="53.5" y="6" width="12" height="12" fill="url(#fg)" stroke="#222" stroke-width="1"/>
  <rect x="77.5" y="6" width="12" height="12" fill="#fff" stroke="#333" stroke-width="1"/>
  <g fill="#6a6a6a"><rect x="78" y="6.5" width="3" height="3"/><rect x="84" y="6.5" width="3" height="3"/><rect x="81" y="9.5" width="3" height="3"/><rect x="87" y="9.5" width="2.5" height="3"/><rect x="78" y="12.5" width="3" height="3"/><rect x="84" y="12.5" width="3" height="3"/><rect x="81" y="15.5" width="3" height="2.5"/><rect x="87" y="15.5" width="2.5" height="2.5"/></g>
</svg>
<div class="box" style="left:970px;top:424.5px;width:149px;height:23px"></div>
<div class="a" style="left:975px;top:430px;width:139.5px;height:12px;background:linear-gradient(90deg,#0fa277,#22cfa8)"></div>
<div class="t d" style="left:872.5px;top:451.8px">Shadow</div>
<div class="sec" style="top:464px"></div>
<div class="a" style="left:878px;top:479px;width:13px;height:13px;background:#fff;border:1px solid #d3d5d7;border-radius:2px"></div>
<svg style="left:904px;top:484px" width="34" height="34" viewBox="0 0 34 34">
  <circle cx="16.5" cy="14.5" r="10.6" fill="none" stroke="#dcddde" stroke-width="3.6"/>
  <circle cx="24.5" cy="22.5" r="6" fill="#e4e5e6" stroke="#d6d7d8" stroke-width="0.7"/>
</svg>
<div class="box dis" style="left:944px;top:473.5px;width:38px;height:22.5px"></div>
<div class="a" style="left:968px;top:474.5px;width:1px;height:20.5px;background:#d9dadb"></div>
<svg style="left:949px;top:478px" width="12" height="12" viewBox="0 0 12 12"><rect x="2.3" y="2.3" width="8.6" height="8.6" fill="#f4f4f4" stroke="#ff7a00" stroke-width="2"/><rect x="2.8" y="2.8" width="7.6" height="7.6" fill="none" stroke="#1a1a1a" stroke-width="1"/></svg>
<svg style="left:970px;top:482px" width="10" height="6" viewBox="0 0 10 6"><path d="M1.5 1 L5 4.5 L8.5 1" fill="none" stroke="#a5a7a9" stroke-width="0.9"/></svg>
<div class="t d" style="left:987.5px;top:481.5px">Blur:</div>
<div class="box dis" style="left:1012px;top:473px;width:104px;height:22.5px"></div>
<div class="t d" style="left:1012px;width:86px;text-align:right;top:480.5px;color:#a5a7a9">0.11 in</div>
<svg style="left:1101.5px;top:474.7px" width="12" height="22" viewBox="0 0 12 22"><g fill="none" stroke="#a5a7a9" stroke-width="0.9"><path d="M1.5 7.5 L5.5 3.5 L9.5 7.5 M1.5 12 L5.5 16 L9.5 12"/></g></svg>
<div class="t d" style="left:943.5px;top:509.3px">Distance:</div>
<div class="box dis" style="left:987px;top:501px;width:128.5px;height:23.5px"></div>
<div class="t d" style="left:987px;width:111px;text-align:right;top:509.3px;color:#a5a7a9">0.11 in</div>
<svg style="left:1101.5px;top:502.7px" width="12" height="22" viewBox="0 0 12 22"><g fill="none" stroke="#a5a7a9" stroke-width="0.9"><path d="M1.5 7.5 L5.5 3.5 L9.5 7.5 M1.5 12 L5.5 16 L9.5 12"/></g></svg>

<!-- palette bar -->
<div class="a" style="left:150px;top:589px;width:718px;height:24px;background:#f4f5f6"></div>

<svg style="left:0;top:0" width="1248" height="702" viewBox="0 0 1248 702">
<defs><clipPath id="pc"><rect x="175" y="592" width="642.2" height="17"/></clipPath></defs>
<g clip-path="url(#pc)"><rect x="175.30" y="593.3" width="14.32" height="14.5" fill="#8b5a45"/><rect x="189.62" y="593.3" width="14.32" height="14.5" fill="#a0684f"/><rect x="203.94" y="593.3" width="14.32" height="14.5" fill="#a86d52"/><rect x="218.26" y="593.3" width="14.32" height="14.5" fill="#c77d63"/><rect x="232.58" y="593.3" width="14.32" height="14.5" fill="#d98a6c"/><rect x="246.90" y="593.3" width="14.32" height="14.5" fill="#e0a088"/><rect x="261.22" y="593.3" width="14.32" height="14.5" fill="#e8b7a4"/><rect x="275.54" y="593.3" width="14.32" height="14.5" fill="#e6b3a0"/><rect x="289.86" y="593.3" width="14.32" height="14.5" fill="#f0d0c4"/><rect x="304.18" y="593.3" width="14.32" height="14.5" fill="#fde5dc"/><rect x="318.50" y="593.3" width="14.32" height="14.5" fill="#8c5843"/><rect x="332.82" y="593.3" width="14.32" height="14.5" fill="#c98466"/><rect x="347.14" y="593.3" width="14.32" height="14.5" fill="#f3c19b"/><rect x="361.46" y="593.3" width="14.32" height="14.5" fill="#f8e2d2"/><rect x="375.78" y="593.3" width="14.32" height="14.5" fill="#fdebcc"/><rect x="390.10" y="593.3" width="14.32" height="14.5" fill="#f2bb86"/><rect x="404.42" y="593.3" width="14.32" height="14.5" fill="#a0623f"/><rect x="418.74" y="593.3" width="14.32" height="14.5" fill="#bc9884"/><rect x="433.06" y="593.3" width="14.32" height="14.5" fill="#4e2620"/><rect x="447.38" y="593.3" width="14.32" height="14.5" fill="#000000"/><rect x="461.70" y="593.3" width="14.32" height="14.5" fill="#5b4035"/><rect x="476.02" y="593.3" width="14.32" height="14.5" fill="#8e6457"/><rect x="490.34" y="593.3" width="14.32" height="14.5" fill="#c49a8f"/><rect x="504.66" y="593.3" width="14.32" height="14.5" fill="#d5a8a6"/><rect x="518.98" y="593.3" width="14.32" height="14.5" fill="#fdf3f3"/><rect x="533.30" y="593.3" width="14.32" height="14.5" fill="#fdeedc"/><rect x="547.62" y="593.3" width="14.32" height="14.5" fill="#f5d3b8"/><rect x="561.94" y="593.3" width="14.32" height="14.5" fill="#dfb292"/><rect x="576.26" y="593.3" width="14.32" height="14.5" fill="#c3917a"/><rect x="590.58" y="593.3" width="14.32" height="14.5" fill="#b87866"/><rect x="604.90" y="593.3" width="14.32" height="14.5" fill="#5a4a4a"/><rect x="619.22" y="593.3" width="14.32" height="14.5" fill="#a4a8b0"/><rect x="633.54" y="593.3" width="14.32" height="14.5" fill="#b8c8da"/><rect x="647.86" y="593.3" width="14.32" height="14.5" fill="#e0e6f0"/><rect x="662.18" y="593.3" width="14.32" height="14.5" fill="#f3f5fc"/><rect x="676.50" y="593.3" width="14.32" height="14.5" fill="#f3c6c6"/><rect x="690.82" y="593.3" width="14.32" height="14.5" fill="#d39e9e"/><rect x="705.14" y="593.3" width="14.32" height="14.5" fill="#8a6e72"/><rect x="719.46" y="593.3" width="14.32" height="14.5" fill="#5a2a2a"/><rect x="733.78" y="593.3" width="14.32" height="14.5" fill="#3a2222"/><rect x="748.10" y="593.3" width="14.32" height="14.5" fill="#5e4a4c"/><rect x="762.42" y="593.3" width="14.32" height="14.5" fill="#9b6e68"/><rect x="776.74" y="593.3" width="14.32" height="14.5" fill="#b89590"/><rect x="791.06" y="593.3" width="14.32" height="14.5" fill="#e2cccc"/><rect x="805.38" y="593.3" width="14.32" height="14.5" fill="#c8b8cc"/>
<g stroke="#3a3a3a" stroke-width="1" fill="none"><path d="M175.80 593.3 V607.8"/><path d="M190.12 593.3 V607.8"/><path d="M204.44 593.3 V607.8"/><path d="M218.76 593.3 V607.8"/><path d="M233.08 593.3 V607.8"/><path d="M247.40 593.3 V607.8"/><path d="M261.72 593.3 V607.8"/><path d="M276.04 593.3 V607.8"/><path d="M290.36 593.3 V607.8"/><path d="M304.68 593.3 V607.8"/><path d="M319.00 593.3 V607.8"/><path d="M333.32 593.3 V607.8"/><path d="M347.64 593.3 V607.8"/><path d="M361.96 593.3 V607.8"/><path d="M376.28 593.3 V607.8"/><path d="M390.60 593.3 V607.8"/><path d="M404.92 593.3 V607.8"/><path d="M419.24 593.3 V607.8"/><path d="M433.56 593.3 V607.8"/><path d="M447.88 593.3 V607.8"/><path d="M462.20 593.3 V607.8"/><path d="M476.52 593.3 V607.8"/><path d="M490.84 593.3 V607.8"/><path d="M505.16 593.3 V607.8"/><path d="M519.48 593.3 V607.8"/><path d="M533.80 593.3 V607.8"/><path d="M548.12 593.3 V607.8"/><path d="M562.44 593.3 V607.8"/><path d="M576.76 593.3 V607.8"/><path d="M591.08 593.3 V607.8"/><path d="M605.40 593.3 V607.8"/><path d="M619.72 593.3 V607.8"/><path d="M634.04 593.3 V607.8"/><path d="M648.36 593.3 V607.8"/><path d="M662.68 593.3 V607.8"/><path d="M677.00 593.3 V607.8"/><path d="M691.32 593.3 V607.8"/><path d="M705.64 593.3 V607.8"/><path d="M719.96 593.3 V607.8"/><path d="M734.28 593.3 V607.8"/><path d="M748.60 593.3 V607.8"/><path d="M762.92 593.3 V607.8"/><path d="M777.24 593.3 V607.8"/><path d="M791.56 593.3 V607.8"/><path d="M805.88 593.3 V607.8"/><path d="M175 593.8 H817 M175 607.3 H817"/></g>
</g>
<path d="M816.6 593.3 V607.8" stroke="#3a3a3a" stroke-width="1"/>
</svg>
<div class="box" style="left:150.5px;top:589.5px;width:21.5px;height:22.5px;border-radius:4px;border-color:#cfd1d3"></div>
<svg style="left:156px;top:597px" width="10" height="6" viewBox="0 0 10 6"><path d="M1.5 1 L5 4.5 L8.5 1" fill="none" stroke="#232629" stroke-width="1"/></svg>
<div class="box dis" style="left:820px;top:590px;width:21.5px;height:21.5px;border-radius:4px;background:#eeeff0;border-color:#e1e2e3"></div>
<svg style="left:827px;top:596px" width="8" height="10" viewBox="0 0 8 10"><path d="M5.5 1 L1.5 5 L5.5 9" fill="none" stroke="#b4b6b8" stroke-width="1"/></svg>
<div class="box" style="left:845.3px;top:589.8px;width:21.6px;height:22px;border-radius:4px;border-color:#cfd1d3"></div>
<svg style="left:853px;top:596px" width="8" height="10" viewBox="0 0 8 10"><path d="M2 1 L6 5 L2 9" fill="none" stroke="#232629" stroke-width="1.1"/></svg>

<!-- status separator -->
<div class="a" style="left:124px;top:613px;width:1000px;height:1px;background:#d3d5d7"></div>
<div class="t" style="left:159px;top:624px;font-size:11.4px">Page 1/1</div>

<div class="t" style="left:769px;top:624px;font-size:11px">500%</div>
<div class="a" style="left:810px;top:626px;width:54px;height:4px;border-radius:2px;background:#5bb8e6"></div>
<div class="a" style="left:858.5px;top:621px;width:14px;height:14px;border-radius:50%;background:#fcfcfc;border:1px solid #c3c5c7"></div>
<div class="t" style="left:878px;top:624px;font-size:11.1px">0.75, -0.07</div>
<div class="t" style="left:937px;top:623.2px;font-size:9.6px">Stroke:</div>
<div class="t" style="left:988.5px;top:623.2px;font-size:9.7px">None</div>
<div class="t" style="left:1032.5px;top:623.2px;font-size:9.6px">Fill:</div>
<div class="a" style="left:1052px;top:615.7px;width:56.2px;height:25px;background:linear-gradient(90deg,#0fa277,#22cfa8)"></div>
</body></html>
